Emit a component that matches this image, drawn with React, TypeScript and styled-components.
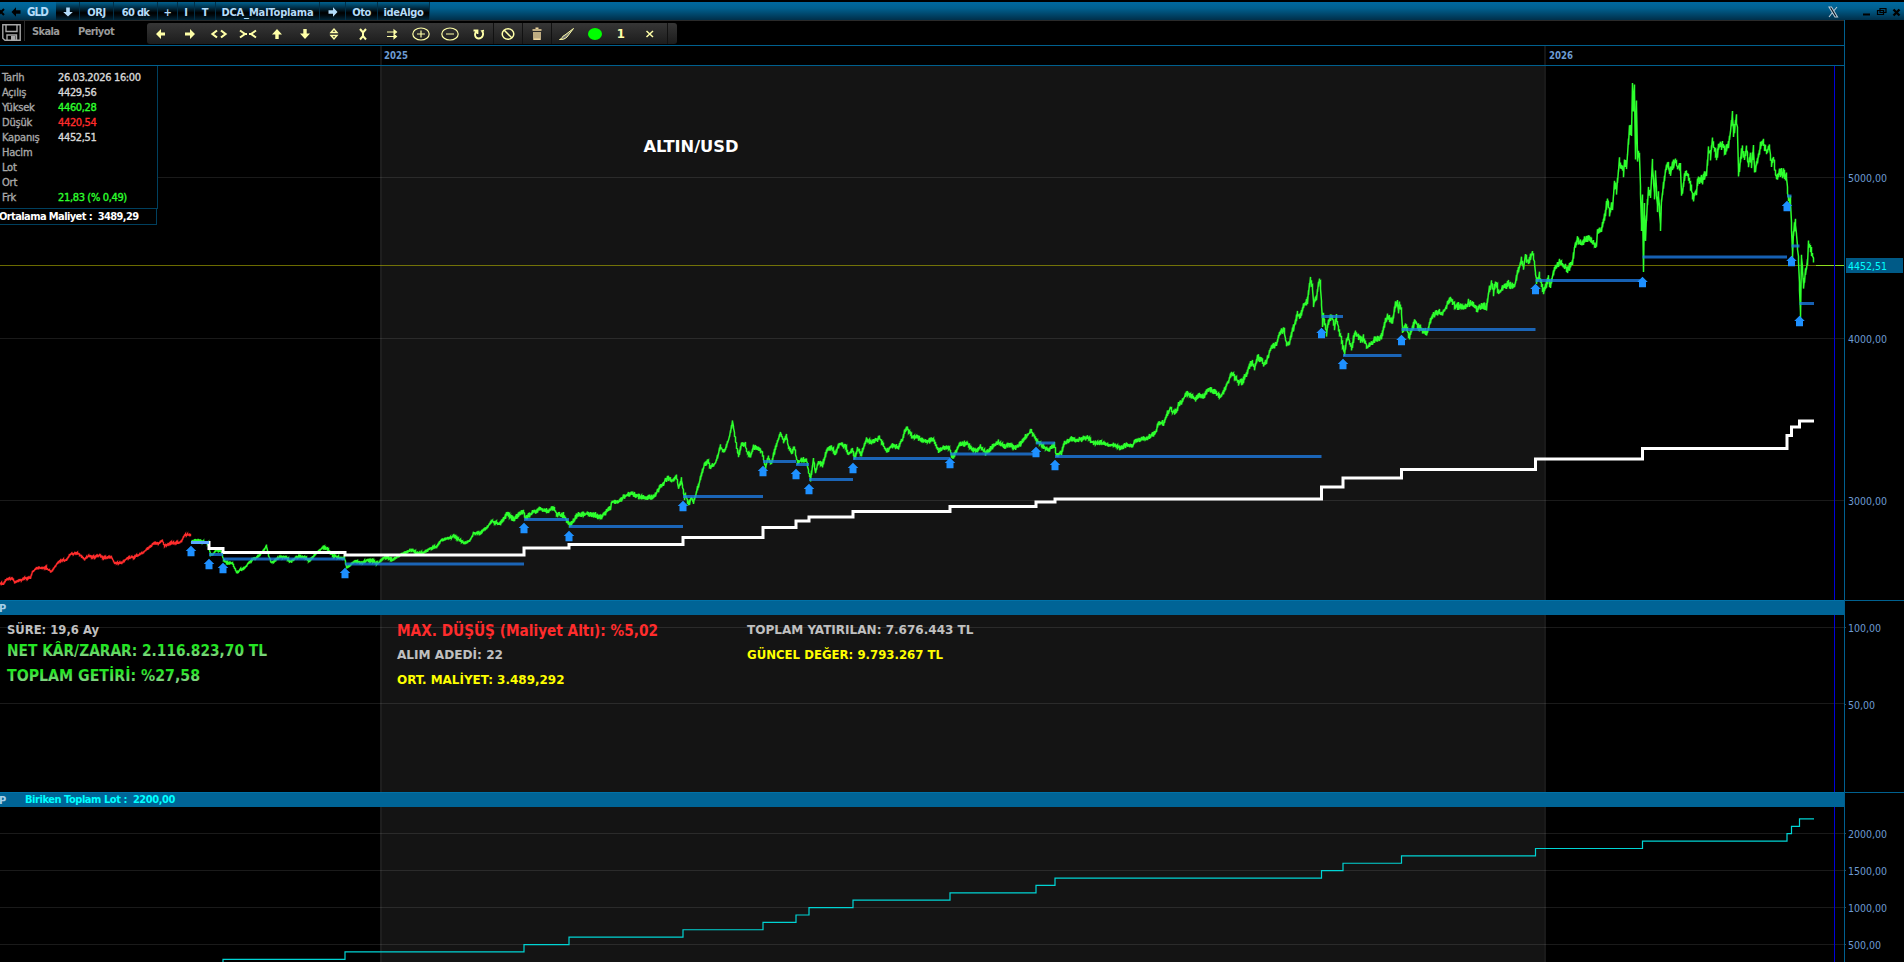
import React from "react";
import styled, { createGlobalStyle } from "styled-components";

const GlobalStyle = createGlobalStyle`
  * { box-sizing: border-box; }
  body {
    margin: 0;
    background: #000;
    overflow: hidden;
    font-family: "DejaVu Sans Condensed", "DejaVu Sans", sans-serif;
    font-stretch: condensed;
  }
  svg { display: block; flex: none; }
`;

const Window = styled.div`
  display: flex;
  flex-direction: column;
  width: 1904px;
  height: 962px;
  padding-top: 2px;
  background: #000;
  overflow: hidden;
`;

const TitleBar = styled.header`
  display: flex;
  align-items: stretch;
  height: 18px;
  background: linear-gradient(#0069a0, #00608f 35%, #002f4a);
  color: #b4dcfa;
`;

const TitleLead = styled.div`
  display: flex;
  align-items: center;
  gap: 1px;
  width: 27px;
  padding-top: 2px;
`;

const Symbol = styled.div`
  width: 29px;
  font-size: 11.5px;
  line-height: 21px;
  font-weight: 700;
  letter-spacing: -0.9px;
`;

const TitleButton = styled.div<{ $w: number; $ls?: number }>`
  display: flex;
  align-items: center;
  justify-content: center;
  width: ${(p) => p.$w}px;
  padding-top: 2px;
  border-right: 1px solid #00314b;
  background: linear-gradient(#00618f, #002a40 35%, #000 60%, #000a10 75%, #00263a);
  font-size: 11px;
  font-weight: 700;
  letter-spacing: ${(p) => p.$ls ?? -0.4}px;
  white-space: nowrap;
`;

const WindowIcons = styled.div`
  display: flex;
  align-items: center;
  margin-left: auto;
  padding-top: 2px;
`;

const Body = styled.div`
  display: flex;
  flex: 1;
`;

const Main = styled.main`
  width: 1844px;
`;

const Axis = styled.aside`
  width: 60px;
  border-left: 1px solid #00608f;
`;

const Toolbar = styled.div`
  display: flex;
  height: 26px;
  border-top: 1px solid #2a2a2a;
  border-bottom: 1px solid #00608f;
`;

const SaveSlot = styled.div`
  width: 25px;
  padding: 3px 0 0 2px;
  height: 20px;
  border-right: 1px solid #2c2c2c;
`;

const MenuItem = styled.div<{ $w: number }>`
  width: ${(p) => p.$w}px;
  padding-left: 7px;
  color: #999;
  font-size: 11px;
  font-weight: 700;
  line-height: 21px;
  letter-spacing: -0.6px;
`;

const ToolStrip = styled.div`
  display: flex;
  align-items: center;
  width: 530px;
  height: 21px;
  margin-top: 2px;
  border-radius: 3px;
  background: linear-gradient(#363636, #1c1c1c);
`;

const Tool = styled.div<{ $w?: number; $sep?: boolean }>`
  display: flex;
  align-items: center;
  justify-content: center;
  width: ${(p) => p.$w ?? 28.9}px;
  height: 100%;
  flex: none;
  border-right: 1px solid ${(p) => (p.$sep ? "#111" : "transparent")};
  color: #ffffa8;
  font-size: 13px;
  font-weight: 700;
`;

const YearRow = styled.div`
  height: 20px;
  border-bottom: 1px solid #00608f;
`;

const PricePane = styled.section`
  position: relative;
  height: 534px;
`;

const QuoteBox = styled.div`
  position: absolute;
  top: 0;
  left: 0;
  width: 158px;
`;

const QuoteTable = styled.div`
  height: 143px;
  padding-top: 4px;
  border-right: 1px solid #00405f;
  border-bottom: 1px solid #00405f;
  background: #000;
`;

const QuoteRow = styled.div`
  display: flex;
  height: 15px;
  padding-left: 2px;
  font-size: 11px;
  line-height: 15px;
`;

const QuoteLabel = styled.span`
  width: 56px;
  color: #a8a8a8;
  letter-spacing: -0.2px;
  -webkit-text-stroke: 0.35px currentColor;
`;

const QuoteValue = styled.span<{ $c?: string }>`
  color: ${(p) => p.$c ?? "#d8d8d8"};
  letter-spacing: -0.35px;
  white-space: nowrap;
  -webkit-text-stroke: 0.35px currentColor;
`;

const CostBox = styled.div`
  width: 157px;
  height: 16px;
  border: solid #00405f;
  border-width: 0 1px 1px 0;
  background: #000;
  color: #fff;
  font-size: 11px;
  font-weight: 700;
  line-height: 15px;
  letter-spacing: -0.6px;
  text-indent: -1px;
  white-space: pre;
`;

const Band = styled.div`
  display: flex;
  align-items: center;
  height: 15px;
  border-top: 1px solid #0072a8;
  background: #006496;
  color: #a8cfe8;
  font-size: 11px;
  font-weight: 700;
  line-height: 13px;
  white-space: pre;
`;

const BandMark = styled.span`
  width: 26px;
  margin-left: -1px;
`;

const BandText = styled.span`
  padding-bottom: 2px;
  color: #00ffff;
  letter-spacing: -0.45px;
`;

const GREEN = "#2dff2d";
const CHART_RIGHT = 1814;

type Pt = [number, number];

// price before the first purchase
const before: Pt[] = [
  [0, 583], [3, 584], [5, 580], [8, 579], [12, 578], [14, 582], [20, 580], [25, 578], [30, 578], [32, 572],
  [36, 568], [46, 568], [51, 572], [54, 567], [59, 561], [66, 560], [70, 554], [77, 553], [84, 559], [88, 556],
  [94, 557], [98, 555], [104, 558], [111, 557], [114, 563], [121, 563], [127, 558], [134, 557], [143, 552],
  [148, 548], [154, 543], [159, 543], [162, 540], [164, 546], [170, 543], [177, 543], [181, 541], [184, 535],
  [190, 535], [191, 542],
];

// price since the first purchase
const after: Pt[] = [
  [191, 542], [195, 540], [205, 542], [208, 543], [210, 555], [214, 553], [216, 549], [221, 552], [223, 560],
  [227, 563], [232, 563], [236, 573], [239, 570], [243, 569], [250, 561], [257, 557], [262, 552], [266, 546],
  [268, 555], [271, 563], [279, 557], [286, 557], [290, 562], [296, 557], [304, 557], [309, 561], [316, 553],
  [323, 547], [327, 549], [332, 555], [339, 558], [344, 558], [346, 567], [350, 565], [354, 561], [361, 563],
  [368, 560], [373, 561], [377, 564], [382, 559], [386, 557], [392, 560], [398, 556], [404, 553], [411, 550],
  [416, 553], [423, 553], [430, 548], [436, 547], [441, 540], [448, 538], [454, 536], [459, 540], [464, 543],
  [470, 540], [473, 533], [480, 533], [487, 527], [491, 521], [498, 524], [504, 519], [507, 513], [511, 518],
  [514, 519], [518, 515], [523, 511], [525, 518], [531, 513], [540, 509], [547, 511], [553, 508], [557, 515],
  [563, 515], [569, 525], [577, 515], [588, 514], [596, 515], [599, 518], [604, 514], [610, 508], [611, 502],
  [618, 502], [624, 496], [631, 493], [637, 496], [643, 498], [653, 497], [659, 488], [667, 478], [673, 481],
  [676, 476], [678, 488], [681, 480], [684, 498], [685, 493], [688, 505], [691, 497], [693, 503], [697, 488],
  [700, 478], [704, 465], [707, 461], [710, 467], [715, 463], [720, 447], [724, 452], [729, 437], [732, 421],
  [735, 440], [738, 457], [741, 443], [745, 445], [747, 453], [750, 456], [753, 447], [761, 451], [763, 458],
  [765, 467], [768, 458], [771, 463], [775, 448], [780, 433], [783, 441], [786, 435], [788, 448], [791, 453],
  [794, 447], [797, 463], [801, 460], [806, 460], [810, 480], [813, 460], [815, 473], [818, 462], [822, 465],
  [826, 451], [831, 447], [835, 454], [839, 443], [845, 447], [848, 454], [852, 450], [854, 458], [857, 449],
  [861, 454], [866, 439], [871, 443], [879, 438], [886, 451], [892, 446], [898, 447], [902, 440], [904, 431],
  [907, 428], [911, 436], [918, 438], [926, 442], [933, 439], [938, 450], [945, 447], [949, 449], [952, 458],
  [959, 445], [966, 443], [971, 448], [976, 452], [980, 447], [985, 453], [992, 447], [998, 442], [1004, 446],
  [1010, 445], [1014, 448], [1020, 444], [1025, 437], [1031, 431], [1034, 438], [1039, 443], [1047, 450],
  [1054, 445], [1056, 456], [1061, 453], [1064, 443], [1071, 439], [1080, 440], [1087, 437], [1092, 443],
  [1102, 443], [1112, 445], [1120, 448], [1126, 445], [1132, 447], [1134, 441], [1140, 440], [1147, 438],
  [1155, 433], [1158, 423], [1163, 423], [1167, 413], [1170, 408], [1172, 413], [1177, 410], [1178, 404],
  [1181, 403], [1186, 393], [1190, 396], [1195, 399], [1199, 395], [1203, 397], [1208, 389], [1215, 392],
  [1220, 397], [1225, 388], [1231, 374], [1234, 376], [1238, 383], [1243, 380], [1248, 368], [1252, 362],
  [1254, 368], [1257, 357], [1261, 360], [1264, 365], [1268, 355], [1272, 346], [1276, 345], [1280, 331],
  [1284, 331], [1286, 346], [1289, 343], [1293, 328], [1297, 314], [1299, 318], [1303, 305], [1307, 300],
  [1310, 279], [1312, 288], [1313, 305], [1316, 297], [1319, 279], [1320, 285], [1322, 323], [1323, 315],
  [1326, 334], [1328, 322], [1331, 315], [1334, 326], [1336, 318], [1339, 332], [1341, 340], [1344, 353],
  [1346, 340], [1348, 337], [1351, 350], [1354, 333], [1358, 337], [1361, 340], [1363, 337], [1367, 348],
  [1372, 342], [1377, 338], [1381, 337], [1383, 327], [1387, 317], [1392, 320], [1395, 305], [1397, 301],
  [1398, 313], [1399, 305], [1401, 310], [1402, 330], [1405, 325], [1409, 337], [1412, 327], [1415, 321],
  [1418, 327], [1423, 330], [1427, 332], [1430, 320], [1435, 313], [1442, 313], [1445, 308], [1450, 297],
  [1455, 307], [1460, 305], [1464, 308], [1468, 303], [1473, 306], [1477, 309], [1482, 305], [1486, 307],
  [1488, 293], [1491, 283], [1493, 292], [1495, 283], [1499, 293], [1503, 287], [1508, 284], [1514, 287],
  [1517, 273], [1521, 260], [1523, 267], [1525, 257], [1528, 262], [1532, 252], [1534, 263], [1536, 283],
  [1539, 275], [1543, 292], [1546, 285], [1548, 277], [1550, 287], [1553, 272], [1556, 267], [1559, 261],
  [1563, 265], [1567, 270], [1572, 262], [1574, 247], [1577, 240], [1581, 243], [1586, 238], [1590, 240],
  [1595, 245], [1596, 245], [1597, 230], [1601, 231], [1604, 217], [1607, 199], [1609, 213], [1612, 205],
  [1614, 185], [1616, 190], [1617, 180], [1619, 162], [1621, 167], [1623, 173], [1624, 163], [1626, 167],
  [1628, 143], [1629, 128], [1631, 132], [1632, 83], [1633, 108], [1634, 88], [1635, 158], [1636, 105],
  [1637, 157], [1639, 153], [1641, 227], [1642, 197], [1643, 271], [1644, 208], [1645, 240], [1646, 217],
  [1648, 190], [1650, 193], [1652, 164], [1654, 198], [1655, 173], [1657, 208], [1658, 193], [1660, 229],
  [1661, 200], [1663, 187], [1665, 170], [1668, 165], [1669, 173], [1672, 167], [1675, 161], [1677, 167],
  [1680, 165], [1681, 194], [1683, 183], [1685, 173], [1688, 177], [1691, 190], [1693, 198], [1696, 190],
  [1698, 178], [1702, 180], [1706, 172], [1708, 150], [1710, 155], [1712, 140], [1714, 150], [1716, 158],
  [1718, 147], [1722, 145], [1725, 152], [1728, 143], [1730, 132], [1732, 113], [1733, 133], [1736, 119],
  [1737, 130], [1738, 174], [1740, 160], [1742, 147], [1744, 158], [1746, 148], [1748, 165], [1750, 157],
  [1751, 165], [1753, 149], [1754, 171], [1757, 160], [1759, 150], [1761, 142], [1763, 143], [1766, 152],
  [1769, 148], [1771, 165], [1773, 158], [1776, 178], [1779, 173], [1783, 173], [1786, 178], [1788, 200],
  [1790, 200], [1792, 253], [1793, 233], [1795, 222], [1797, 247], [1798, 260], [1800, 314], [1801, 257],
  [1803, 285], [1805, 273], [1807, 263], [1808, 245], [1811, 252], [1812, 255], [1814, 268],
];

// purchases: x, level of the blue line, top of the arrow, average cost
const buys = [
  [191, 542.5, 546, 542.5], [209, 554.5, 559, 548.5], [223, 559, 563, 552.5], [345, 564, 568, 555],
  [524, 519.5, 523, 548], [569, 526.5, 531, 544.5], [683, 496.5, 501, 537.5], [763, 461.5, 466, 527.5],
  [796, 464.5, 469, 521], [809, 479.5, 484, 517], [853, 458.5, 463, 511.5], [950, 454, 458, 506.5],
  [1036, 443, 447, 502], [1055, 456.5, 460, 499], [1321.5, 316.5, 328, 487], [1343, 355.5, 359, 478],
  [1401.5, 329.5, 335, 469.5], [1535.5, 280.5, 284, 459], [1642.5, 257, 277, 448.5],
  [1787, 196, 201, 435.5], [1791.5, 246, 256, 427], [1799.5, 303.5, 316, 421],
];

const nextX = (i: number) => (i + 1 < buys.length ? buys[i + 1][0] : CHART_RIGHT);

// hourly bars between the pivots: each pixel column gets a small high/low spread
function bars(points: Pt[], spread: (x: number) => number) {
  let seed = 17;
  const rnd = () => {
    seed = (seed * 16807) % 2147483647;
    return seed / 2147483647;
  };
  let d = "";
  for (let i = 0; i < points.length - 1; i++) {
    const [x0, y0] = points[i];
    const [x1, y1] = points[i + 1];
    for (let x = x0; x < x1; x++) {
      const y = y0 + ((y1 - y0) * (x - x0)) / (x1 - x0);
      const s = spread(x);
      const hi = (y - rnd() * s).toFixed(1);
      const lo = (y + rnd() * s).toFixed(1);
      d += `${d ? "L" : "M"}${x + 0.5} ${hi}V${lo}`;
    }
  }
  return d;
}

function steps(level: (i: number) => number) {
  return buys.map((b, i) => `${i ? "L" : "M"}${b[0]} ${level(i)}H${nextX(i)}`).join("");
}

const lotY = (i: number) => 981.5 - (i + 1) * 7.39;

interface LabelProps {
  x: number;
  y: number;
  w: number;
  size?: number;
  fill: string;
  bold?: boolean;
  children: string;
}

function Label({ x, y, w, size = 11, fill, bold, children }: LabelProps) {
  return (
    <text x={x} y={y} fontSize={size} fill={fill} fontWeight={bold ? 700 : 400} textLength={w} lengthAdjust="spacingAndGlyphs">
      {children}
    </text>
  );
}

function Canvas({ top, height, grid, children }: { top: number; height: number; grid: number[]; children?: React.ReactNode }) {
  return (
    <svg width={1844} height={height} viewBox={`0 ${top} 1844 ${height}`}>
      <rect x={381} y={top} width={1164} height={height} fill="#141414" />
      <rect x={380} y={top} width={2} height={height} fill="#1e1e1e" />
      <rect x={1544} y={top} width={2} height={height} fill="#1a1a1a" />
      {grid.map((y) => (
        <rect key={y} x={0} y={y} width={1844} height={1} fill="#fff" opacity={0.1} />
      ))}
      {children}
      <rect x={1834} y={top} width={1} height={height} fill="#0000d8" />
    </svg>
  );
}

function AxisLabels({ top, height, ticks }: { top: number; height: number; ticks: [number, string][] }) {
  return (
    <svg width={59} height={height} viewBox={`1845 ${top} 59 ${height}`}>
      {ticks.map(([y, t]) => (
        <React.Fragment key={t}>
          <rect x={1845} y={y} width={1} height={1} fill="#345" />
          <Label x={1848} y={y + 5} w={t.length * 6 - 3} fill="#6c9bd2">{t}</Label>
        </React.Fragment>
      ))}
    </svg>
  );
}

const AxisGroup = styled.div<{ $line?: boolean }>`
  border-top: ${(p) => (p.$line ? "1px solid #00608f" : "none")};
`;

const icons: Record<string, React.ReactNode> = {
  left: <path d="M5 10l5-5v3.500h4v3h-4V15z" fill="currentColor" />,
  right: <path d="M15 10l-5-5v3.500H5v3h5V15z" fill="currentColor" />,
  widen: <path d="M8 6.500L3.500 10 8 13.500M12 6.500l4.500 3.500-4.500 3.500" fill="none" stroke="currentColor" strokeWidth={2.200} />,
  narrow: <path d="M2 6.500L7 10l-5 3.500M18 6.500L13 10l5 3.500M5 10h4M11 10h4" fill="none" stroke="currentColor" strokeWidth={2} />,
  up: <path d="M10 5l5 5.500h-3.300V15H8.300v-4.500H5z" fill="currentColor" />,
  down: <path d="M10 15l5-5.500h-3.300V5H8.300v4.500H5z" fill="currentColor" />,
  tall: <path d="M7 8.500L10 5l3 3.500zM7 11.500l3 3.500 3-3.500z" fill="none" stroke="currentColor" strokeWidth={1.400} />,
  short: <path d="M7 5l3 3.500L13 5M7 15.500l3-3.500 3 3.500M10 8v5" fill="none" stroke="currentColor" strokeWidth={2} />,
  shift: <path d="M5 8h7M5 12.500h7M12 6v4l2.500-2zM12 10.500v4l2.500-2z" fill="currentColor" stroke="currentColor" strokeWidth={1.100} />,
  plus: <path d="M1.800 10a8.200 6 0 1 0 16.400 0a8.200 6 0 1 0-16.400 0M6 10h8M10 6.500v7" fill="none" stroke="currentColor" strokeWidth={1.200} />,
  minus: <path d="M1.800 10a8.200 6 0 1 0 16.400 0a8.200 6 0 1 0-16.400 0M6 10h8" fill="none" stroke="currentColor" strokeWidth={1.200} />,
  undo: <path d="M4.500 6.500H8.500V10M8 7C4.500 9.500 6 14.500 9.700 14.500s5.800-4.500 3.300-7.500l2-.5" fill="none" stroke="currentColor" strokeWidth={1.800} />,
  ban: <path d="M4.200 10a5.800 5.300 0 1 0 11.600 0a5.800 5.300 0 1 0-11.600 0M6.300 6.200l7.400 7.600" fill="none" stroke="currentColor" strokeWidth={1.500} />,
  trash: <path d="M5.500 6h9M8.500 4.300h3M7 8v7.300h6V8M9 8v7M11 8v7" fill="none" stroke="#f0d8a0" strokeWidth={1.500} />,
  brush: <path d="M2.500 15.500c3-.3 2.500-4 5.500-4.500l8.500-6.500-6.500 8.500c-2 2-4 2.700-7.500 2.500z" fill="#777" stroke="currentColor" strokeWidth={1} />,
  dot: <ellipse cx={10} cy={10} rx={7} ry={6} fill="#00ff00" />,
  close: <path d="M6.500 7l6.500 6M13 7l-6.500 6" stroke="currentColor" strokeWidth={1.500} />,
};

const tools: [string, number?, boolean?][] = [
  ["left"], ["right"], ["widen"], ["narrow"], ["up"], ["down"], ["tall"], ["short"], ["shift"], ["plus"], ["minus"],
  ["undo", 29, true], ["ban", 29, true], ["trash", 29, true], ["brush", 31], ["dot", 26], ["1", 25], ["close", 34, true],
];

const quote: [string, string?, string?][] = [
  ["Tarih", "26.03.2026 16:00"],
  ["Açılış", "4429,56"],
  ["Yüksek", "4460,28", GREEN],
  ["Düşük", "4420,54", "#ff2c2c"],
  ["Kapanış", "4452,51"],
  ["Hacim"],
  ["Lot"],
  ["Ort"],
  ["Frk", "21,83 (% 0,49)", GREEN],
];

function Arrow({ dir }: { dir: "down" | "right" | "left" }) {
  const turn = { down: 0, right: -90, left: 90 }[dir];
  return (
    <svg width={12} height={12} viewBox="0 0 12 12">
      <path d="M4.200 1.500h3.600v4.500h3L6 10.500 1.200 6h3z" transform={`rotate(${turn} 6 6)`} fill={dir === "left" ? "#000" : "#b4dcfa"} />
    </svg>
  );
}

export default function App() {
  return (
    <Window>
      <GlobalStyle />
      <TitleBar>
        <TitleLead>
          <svg width={9} height={12} viewBox="0 0 9 12">
            <path d="M-2 3l6 6M4 3l-6 6" stroke="#000" strokeWidth={2} />
          </svg>
          <Arrow dir="left" />
        </TitleLead>
        <Symbol>GLD</Symbol>
        <TitleButton $w={24}><Arrow dir="down" /></TitleButton>
        <TitleButton $w={34}>ORJ</TitleButton>
        <TitleButton $w={44} $ls={-0.7}>60 dk</TitleButton>
        <TitleButton $w={20}>+</TitleButton>
        <TitleButton $w={17}>I</TitleButton>
        <TitleButton $w={21}>T</TitleButton>
        <TitleButton $w={104} $ls={-0.15}>DCA_MalToplama</TitleButton>
        <TitleButton $w={26}><Arrow dir="right" /></TitleButton>
        <TitleButton $w={32}>Oto</TitleButton>
        <TitleButton $w={52} $ls={-0.3}>ideAlgo</TitleButton>
        <WindowIcons>
          <svg width={78} height={16} viewBox="1826 3 78 16">
            <path d="M1829 6h2.500l6 10h-2.500zM1837 6l-3.300 4M1829 16l3.500-4.500" fill="#012" stroke="#b8c8d4" strokeWidth={1.100} />
            <path d="M1863 13.500h7" stroke="#000" strokeWidth={2} />
            <path d="M1880 7.500h6v4h-6zM1877.500 9.500h6v4h-6z" fill="#004a70" stroke="#000" strokeWidth={1.200} />
            <path d="M1893.500 8.500l6 6M1899.500 8.500l-6 6" stroke="#000" strokeWidth={2.400} />
          </svg>
        </WindowIcons>
      </TitleBar>
      <Body>
        <Main>
          <Toolbar>
            <SaveSlot>
              <svg width={19} height={17} viewBox="0 0 19 17">
                <path d="M.8.800h17.400v15.400H3l-2.200-2zM4 1v6.500h11V1M5 16v-5h9.500v5" fill="none" stroke="#a8a8a8" strokeWidth={1.400} />
                <path d="M9 12h4.500v4H9z" fill="#a8a8a8" />
              </svg>
            </SaveSlot>
            <MenuItem $w={46}>Skala</MenuItem>
            <MenuItem $w={76}>Periyot</MenuItem>
            <ToolStrip>
              {tools.map(([name, w, sep]) => (
                <Tool key={name} $w={w} $sep={sep}>
                  {icons[name] ? <svg width={20} height={20} viewBox="0 0 20 20">{icons[name]}</svg> : name}
                </Tool>
              ))}
            </ToolStrip>
          </Toolbar>
          <YearRow>
            <svg width={1844} height={19} viewBox="0 46 1844 19">
              <rect x={380} y={46} width={2} height={19} fill="#151515" />
              <rect x={1544} y={46} width={2} height={19} fill="#151515" />
              <Label x={384} y={59} w={24} fill="#6c9bd2" bold>2025</Label>
              <Label x={1549} y={59} w={24} fill="#6c9bd2" bold>2026</Label>
            </svg>
          </YearRow>
          <PricePane>
            <Canvas top={66} height={534} grid={[177, 338, 500]}>
              <path d="M0 265.500H1816" stroke="#b0b000" strokeOpacity={0.6} />
              <path d="M1816 265.500H1844" stroke="#8fdc20" />
              <Label x={643.5} y={152} w={95} size={15.5} fill="#fff" bold>ALTIN/USD</Label>
              <path d={bars(before, () => 1.5)} fill="none" stroke="#ff2c2c" strokeWidth={1.400} />
              <path
                d={bars(after, (x) => (x < 500 ? 1.6 : x < 1240 ? 3 : x < 1600 ? 4.2 : 5.5))}
                fill="none"
                stroke={GREEN}
                strokeWidth={1.500}
              />
              <path d={steps((i) => buys[i][3])} fill="none" stroke="#fff" strokeWidth={3} />
              {buys.map(([x, y], i) => (
                <rect
                  key={x}
                  x={x}
                  y={y - 1.5}
                  width={nextX(i) - x}
                  height={3}
                  fill={i ? "#1e80ee" : "#5aa8ff"}
                  opacity={i ? 0.75 : 1}
                />
              ))}
              {buys.map(([x, , y]) => (
                <path key={x} d={`M${x} ${y - 0.3}l5.300 5.300h-1.800v5.300h-7v-5.300h-1.800z`} fill="#1e90ff" />
              ))}
            </Canvas>
            <QuoteBox>
              <QuoteTable>
                {quote.map(([label, value, color]) => (
                  <QuoteRow key={label}>
                    <QuoteLabel>{label}</QuoteLabel>
                    <QuoteValue $c={color}>{value}</QuoteValue>
                  </QuoteRow>
                ))}
              </QuoteTable>
              <CostBox>Ortalama Maliyet :  3489,29</CostBox>
            </QuoteBox>
          </PricePane>
          <Band>
            <BandMark>P</BandMark>
          </Band>
          <Canvas top={615} height={177} grid={[627, 703]}>
            <defs>
              <linearGradient id="gain" x1="0" y1="0" x2="0" y2="1">
                <stop offset="0.3" stopColor="#22e622" />
                <stop offset="0.85" stopColor="#8fd08f" />
              </linearGradient>
            </defs>
            <Label x={7} y={634} w={92} size={13} fill="#c0c0c0" bold>SÜRE: 19,6 Ay</Label>
            <Label x={7} y={656} w={260} size={15.5} fill="url(#gain)" bold>NET KÂR/ZARAR: 2.116.823,70 TL</Label>
            <Label x={7} y={681} w={193} size={15.5} fill="url(#gain)" bold>TOPLAM GETİRİ: %27,58</Label>
            <Label x={397} y={636} w={261} size={15.5} fill="#ff2c2c" bold>MAX. DÜŞÜŞ (Maliyet Altı): %5,02</Label>
            <Label x={397} y={659} w={106} size={13} fill="#c0c0c0" bold>ALIM ADEDİ: 22</Label>
            <Label x={397} y={684} w={167.5} size={13} fill="#ffff00" bold>ORT. MALİYET: 3.489,292</Label>
            <Label x={747} y={634} w={226.5} size={13} fill="#c0c0c0" bold>TOPLAM YATIRILAN: 7.676.443 TL</Label>
            <Label x={747} y={659} w={196} size={13} fill="#ffff00" bold>GÜNCEL DEĞER: 9.793.267 TL</Label>
          </Canvas>
          <Band>
            <BandMark>P</BandMark>
            <BandText>Biriken Toplam Lot :  2200,00</BandText>
          </Band>
          <Canvas top={807} height={155} grid={[833, 870, 907, 944]}>
            <path d={steps(lotY)} fill="none" stroke="#00d4d4" strokeWidth={1.200} />
          </Canvas>
        </Main>
        <Axis>
          <AxisGroup>
            <svg width={59} height={580} viewBox="1845 20 59 580">
              <rect x={1846} y={258} width={57} height={15} fill="#005a87" />
              <Label x={1848} y={270} w={39} fill="#00ffff">4452,51</Label>
              {([[177, "5000,00"], [338, "4000,00"], [500, "3000,00"]] as [number, string][]).map(([y, t]) => (
                <Label key={t} x={1848} y={y + 5} w={39} fill="#6c9bd2">{t}</Label>
              ))}
            </svg>
          </AxisGroup>
          <AxisGroup $line>
            <AxisLabels top={601} height={191} ticks={[[627, "100,00"], [704, "50,00"]]} />
          </AxisGroup>
          <AxisGroup $line>
            <AxisLabels
              top={793}
              height={169}
              ticks={[[833, "2000,00"], [870, "1500,00"], [907, "1000,00"], [944, "500,00"]]}
            />
          </AxisGroup>
        </Axis>
      </Body>
    </Window>
  );
}
